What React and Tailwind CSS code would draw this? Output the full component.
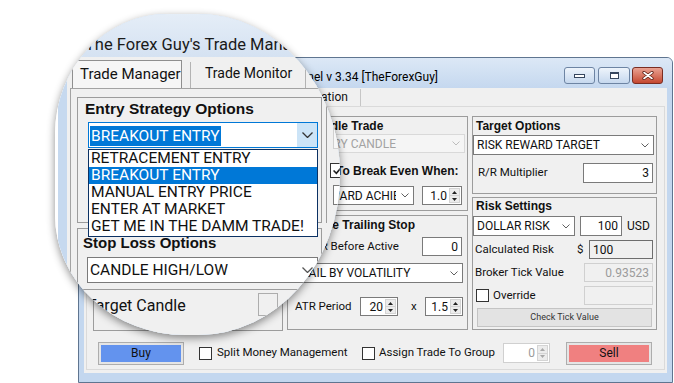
import React from "react";

const sans = "font-['Roboto','Liberation_Sans',sans-serif]";
const bold = "font-['Liberation_Sans',Arial,sans-serif] font-bold";

const Tri = ({ up, color = "#222" }) => (
  <svg width="5" height="3" viewBox="0 0 5 3">
    <polygon points={up ? "0,3 5,3 2.5,0" : "0,0 5,0 2.5,3"} fill={color} />
  </svg>
);

const Chevron = ({ color = "#606060", big }) =>
  big ? (
    <svg width="11" height="6" viewBox="0 0 11 6">
      <polyline points="0.5,0.5 5.5,5.5 10.5,0.5" fill="none" stroke={color} strokeWidth="1.3" />
    </svg>
  ) : (
    <svg width="8" height="5" viewBox="0 0 8 5">
      <polyline points="0.5,0.5 4,4 7.5,0.5" fill="none" stroke={color} strokeWidth="1" />
    </svg>
  );

const Check = ({ checked, big, className = "" }) => (
  <span
    className={`inline-flex shrink-0 items-center justify-center border border-[#333] bg-white ${
      big ? "w-[15px] h-[15px]" : "w-[13px] h-[13px]"
    } ${className}`}
  >
    {checked && (
      <svg width={big ? 11 : 9} height={big ? 9 : 8} viewBox="0 0 9 8">
        <polyline points="1,4 3.5,6.5 8,1" fill="none" stroke="#222" strokeWidth="1.4" />
      </svg>
    )}
  </span>
);

const Combo = ({ text, className = "", disabled }) => (
  <div
    className={`flex items-center border ${
      disabled ? "border-[#d9d9d9] bg-[#f5f5f5] text-[#a3a3a3]" : "border-[#7a7a7a] bg-white text-[#111]"
    } ${className}`}
  >
    <span className="flex-1 min-w-0 overflow-hidden whitespace-nowrap pl-[3px] text-[12px] leading-[14px]">
      {text}
    </span>
    <span className="w-[17px] shrink-0 flex justify-center">
      <Chevron color={disabled ? "#bdbdbd" : "#606060"} />
    </span>
  </div>
);

const tones = {
  normal: "border-[#7a7a7a] bg-white text-[#111]",
  readonly: "border-[#6e6e6e] bg-[#f0f0f0] text-[#111]",
  disabled: "border-[#d0d0d0] bg-[#f0f0f0] text-[#9b9b9b]",
};

const Field = ({ value, className = "", left, tone = "normal" }) => (
  <div
    className={`flex items-center border px-[3px] text-[12px] leading-[14px] ${
      left ? "justify-start" : "justify-end"
    } ${tones[tone]} ${className}`}
  >
    {value}
  </div>
);

const Spin = ({ value, className = "", disabled }) => {
  const c = disabled ? "#a8a8a8" : "#222";
  return (
    <div
      className={`flex border bg-white ${
        disabled ? "border-[#d0d0d0] text-[#9b9b9b]" : "border-[#7a7a7a] text-[#111]"
      } ${className}`}
    >
      <span className="flex-1 flex items-center justify-end pr-[2px] text-[12px] leading-[14px]">{value}</span>
      <span className="w-[11px] my-[1px] mr-[1px] flex flex-col bg-[#ececec] border border-[#d4d4d4]">
        <span className="flex-1 flex items-center justify-center border-b border-[#d4d4d4]">
          <Tri up color={c} />
        </span>
        <span className="flex-1 flex items-center justify-center">
          <Tri color={c} />
        </span>
      </span>
    </div>
  );
};

const Panel = ({ className = "", children }) => (
  <div className={`flex flex-col border border-[#9c9c9c] ${className}`}>{children}</div>
);

const Title = ({ children, className = "" }) => (
  <div className={`${bold} text-[12px] leading-[14px] text-[#111] whitespace-nowrap ${className}`}>{children}</div>
);

const entryItems = [
  "RETRACEMENT ENTRY",
  "BREAKOUT ENTRY",
  "MANUAL ENTRY PRICE",
  "ENTER AT MARKET",
  "GET ME IN THE DAMM TRADE!",
];

const Lens = () => (
  <div className="absolute left-[55px] top-[14px] w-[285px] h-[321px] overflow-hidden rounded-[112px_142px_142px_130px/120px_160px_160px_120px] shadow-[0_3px_8px_rgba(0,0,0,0.45)]">
    <div className="-ml-[55px] -mt-[14px] w-[674px] h-[383px] bg-white">
      <div className="ml-[58px] w-[600px] h-[383px] flex flex-col bg-[#c6d9ef]">
        <div className="h-[57px] shrink-0 pl-[27px] pt-[35px] bg-gradient-to-b from-[#eaf1f9] to-[#d5e2f2]">
          <div className="text-[16.5px] leading-[20px] text-[#1a1a1a] whitespace-nowrap">
            The Forex Guy's Trade Manager Panel v 3.34 [TheForexGuy]
          </div>
        </div>
        <div className="flex-1 ml-[9px] flex flex-col bg-[#f0f0f0] text-[#111]">
          <div className="h-[31px] shrink-0 flex items-end pl-[5px]">
            <div className="w-[110px] h-[28px] border border-b-0 border-[#8f8f8f] bg-[#f6f6f6] pl-[7px] pt-[4px] text-[15px] leading-[18px]">
              Trade Manager
            </div>
            <div className="ml-[8px] w-[116px] h-[26px] border-l border-r border-[#b3b3b3] pl-[14px] pt-[2px] text-[14px] leading-[18px]">
              Trade Monitor
            </div>
          </div>
          <div className="ml-[3px] flex-1 border-l border-t border-[#a3a3a3]">
            <div className="flex pl-[6px] pt-[8px]">
              <div className="w-[245px] flex flex-col">
                <Panel className="h-[126px]">
                  <div className={`${bold} pl-[7px] mt-[2px] text-[15.5px] leading-[18px] whitespace-nowrap`}>
                    Entry Strategy Options
                  </div>
                  <div className="relative ml-[10px] mt-[4px] w-[230px] h-[26px] flex border border-[#0078d7] bg-white">
                    <div className="flex-1 pl-[1px] pt-[1px]">
                      <span className="inline-block bg-[#0078d7] px-[1px] text-white text-[15.5px] leading-[20px]">
                        BREAKOUT ENTRY
                      </span>
                    </div>
                    <div className="w-[20px] flex items-center justify-center bg-[#cce4f7]">
                      <Chevron big color="#333" />
                    </div>
                    <div className="absolute left-[-1px] top-[26px] z-10 w-[230px] h-[88px] flex flex-col border border-[#0b3163] bg-white">
                      {entryItems.map((item, i) => (
                        <div
                          key={item}
                          className={`h-[17px] pl-[2px] text-[15.5px] leading-[17px] whitespace-nowrap ${
                            i === 1 ? "bg-[#0078d7] text-white" : "text-[#111]"
                          }`}
                        >
                          {item}
                        </div>
                      ))}
                    </div>
                  </div>
                </Panel>
                <Panel className="mt-[5px] h-[62px]">
                  <div className={`${bold} pl-[5px] mt-[5px] text-[15px] leading-[18px] whitespace-nowrap`}>
                    Stop Loss Options
                  </div>
                  <div className="ml-[9px] mt-[5px] w-[231px] h-[26px] flex items-center border border-[#7a7a7a] bg-white">
                    <span className="flex-1 pl-[2px] text-[15.5px] leading-[20px] whitespace-nowrap">CANDLE HIGH/LOW</span>
                    <span className="w-[20px] flex justify-center">
                      <Chevron big color="#555" />
                    </span>
                  </div>
                </Panel>
                <div className="mt-[3px] h-[24px] flex">
                  <div className="w-[181px] pl-[10px] pt-[4px] text-[16px] leading-[18px]">Target Candle</div>
                  <div className="w-[20px] h-[23px] border border-[#adadad] bg-[#f0f0f0]" />
                </div>
              </div>
              <div className="ml-[4px] w-[200px] h-[126px] flex flex-col border-l border-t border-[#9c9c9c]">
                <div className="ml-[6px] mt-[25px] w-[150px] h-[26px] border border-[#d0d0d0] bg-[#f7f7f7]" />
                <Check big checked className="ml-[3px] mt-[14px]" />
                <div className="ml-[6px] mt-[7px] w-[150px] h-[20px] border border-[#7a7a7a] bg-white" />
              </div>
            </div>
          </div>
        </div>
      </div>
    </div>
  </div>
);

export default function App() {
  return (
    <div className={`relative w-[674px] h-[383px] overflow-hidden bg-white pl-[78px] pt-[57px] ${sans}`}>
      <div className="w-[595px] h-[326px] flex flex-col rounded-t-[6px] border border-[#5f7590] bg-[#c3d7ef]">
        <div className="h-[30px] shrink-0 flex items-start rounded-t-[5px] bg-gradient-to-b from-[#dce8f6] to-[#c5d8ef]">
          <div className="pl-[44px] pt-[12px] text-[12px] leading-[14px] text-black whitespace-nowrap">
            The Forex Guy's Trade Manager Panel v 3.34 [TheForexGuy]
          </div>
          <div className="ml-auto mr-[9px] mt-[9px] flex">
            <div className="w-[31px] h-[17px] flex justify-center rounded-[3px] border border-[#6d84a3] bg-gradient-to-b from-[#eef4fb] to-[#c6d8ee]">
              <div className="mt-[6px] w-[11px] h-[4px] border border-[#36465e] bg-white" />
            </div>
            <div className="ml-[3px] w-[32px] h-[17px] flex items-center justify-center rounded-[3px] border border-[#6d84a3] bg-gradient-to-b from-[#eef4fb] to-[#c6d8ee]">
              <div className="w-[9px] h-[7px] border border-[#36465e] border-t-2 bg-white" />
            </div>
            <div className="ml-[2px] w-[31px] h-[17px] flex items-center justify-center rounded-[3px] border border-[#7a2d22] bg-gradient-to-b from-[#e9a293] to-[#c4462f]">
              <svg width="12" height="9" viewBox="0 0 12 9">
                <path d="M2 1.5 L10 7.5 M10 1.5 L2 7.5" stroke="#5b1d12" strokeWidth="3.2" strokeLinecap="round" />
                <path d="M2 1.5 L10 7.5 M10 1.5 L2 7.5" stroke="#fff" strokeWidth="1.6" strokeLinecap="round" />
              </svg>
            </div>
          </div>
        </div>

        <div className="mx-[5px] h-[285px] shrink-0 flex flex-col bg-[#f0f0f0] text-[#111]">
          <div className="h-[18px] shrink-0 flex items-end pl-[2px] text-[12px] leading-[14px]">
            <div className="w-[88px] h-[18px] border border-b-0 border-[#cfcfcf] bg-white pl-[6px] pt-[1px]">Trade Manager</div>
            <div className="w-[86px] h-[17px] border-r border-[#cfcfcf] pl-[6px] pt-[1px]">Trade Monitor</div>
            <div className="w-[101px] h-[17px] border-r border-[#c6c6c6] pl-[6px] pt-[1px]">Documentation</div>
          </div>

          <div className="ml-[2px] w-[579px] h-[264px] flex flex-col border border-[#dadada]">
            <div className="flex gap-[4px] pl-[6px] pt-[9px]">
              {/* left column */}
              <div className="w-[190px] flex flex-col gap-[4px]">
                <Panel className="h-[54px]">
                  <Title className="pl-[3px] mt-[2px]">Entry Strategy Options</Title>
                  <Combo text="BREAKOUT ENTRY" className="ml-[1px] mt-[1px] w-[186px] h-[20px]" />
                </Panel>
                <Panel className="h-[54px]">
                  <Title className="pl-[3px] mt-[2px]">Stop Loss Options</Title>
                  <Combo text="CANDLE HIGH/LOW" className="ml-[1px] mt-[1px] w-[186px] h-[20px]" />
                </Panel>
                <Panel className="h-[99px]">
                  <div className="mt-[4px] h-[20px] flex items-center pl-[3px] text-[11.5px]">
                    <span className="flex-1">Target Candle</span>
                    <Spin value="1" className="w-[40px] h-[19px] mr-[4px]" />
                  </div>
                </Panel>
              </div>

              {/* middle column */}
              <div className="w-[181px] flex flex-col gap-[4px]">
                <Panel className="h-[95px]">
                  <div className="mt-[1px] h-[16px] flex items-center gap-[4px] pl-[3px]">
                    <Check checked />
                    <Title>Handle Trade</Title>
                  </div>
                  <Combo disabled text="ENTRY CANDLE" className="ml-[19px] w-[158px] h-[19px]" />
                  <div className="mt-[11px] h-[14px] flex items-center">
                    <Check checked />
                    <Title className="ml-[1px]">Move To Break Even When:</Title>
                  </div>
                  <div className="mt-[8px] flex">
                    <Combo text="REWARD ACHIEVED" className="ml-[23px] w-[103px] h-[19px]" />
                    <Spin value="1.0" className="ml-[8px] w-[40px] h-[19px]" />
                  </div>
                </Panel>
                <Panel className="h-[115px]">
                  <div className="mt-[1px] h-[16px] flex items-center gap-[4px] pl-[12px]">
                    <Check checked />
                    <Title>Use Trailing Stop</Title>
                  </div>
                  <div className="mt-[4px] h-[19px] flex items-center text-[11.5px]">
                    <span className="ml-[19px]">ATR Before Active</span>
                    <Field value="0" className="ml-auto mr-[5px] w-[40px] h-[19px]" />
                  </div>
                  <Combo text="TRAIL BY VOLATILITY" className="ml-[2px] mt-[7px] w-[173px] h-[20px]" />
                  <div className="mt-[14px] h-[19px] flex items-center text-[11.5px]">
                    <span className="ml-[7px] w-[65px]">ATR Period</span>
                    <Spin value="20" className="w-[38px] h-[19px]" />
                    <span className="w-[27px] pl-[13px]">x</span>
                    <Spin value="1.5" className="w-[38px] h-[19px]" />
                  </div>
                </Panel>
              </div>

              {/* right column */}
              <div className="w-[185px] flex flex-col gap-[3px]">
                <Panel className="h-[78px]">
                  <Title className="pl-[3px] mt-[2px]">Target Options</Title>
                  <Combo text="RISK REWARD TARGET" className="mt-[2px] w-[181px] h-[20px]" />
                  <div className="mt-[8px] h-[20px] flex items-center text-[11.5px]">
                    <span className="pl-[5px]">R/R Multiplier</span>
                    <Field value="3" className="ml-auto mr-[3px] w-[70px] h-[20px]" />
                  </div>
                </Panel>
                <Panel className="h-[133px]">
                  <Title className="pl-[3px] mt-[1px]">Risk Settings</Title>
                  <div className="mt-[3px] h-[20px] flex items-center text-[11.5px]">
                    <Combo text="DOLLAR RISK" className="w-[102px] h-[20px]" />
                    <Field value="100" className="ml-[5px] w-[42px] h-[20px]" />
                    <span className="ml-[5px] text-[12px]">USD</span>
                  </div>
                  <div className="mt-[4px] h-[19px] flex items-center text-[11.5px]">
                    <span className="w-[104px] pl-[2px]">Calculated Risk</span>
                    <span className="w-[12px]">$</span>
                    <Field left tone="readonly" value="100" className="w-[64px] h-[19px]" />
                  </div>
                  <div className="mt-[4px] h-[19px] flex items-center text-[11.5px]">
                    <span className="w-[111px] pl-[2px]">Broker Tick Value</span>
                    <Field tone="disabled" value="0.93523" className="w-[69px] h-[19px]" />
                  </div>
                  <div className="mt-[4px] h-[19px] flex items-center text-[11.5px]">
                    <Check className="ml-[3px]" />
                    <span className="ml-[4px]">Override</span>
                    <Field tone="disabled" value="" className="ml-auto mr-[3px] w-[69px] h-[19px]" />
                  </div>
                  <div className="ml-[4px] mt-[3px] w-[175px] h-[19px] flex items-center justify-center border border-[#c4c4c4] bg-[#e3e3e3] text-[9px] text-[#333]">
                    Check Tick Value
                  </div>
                </Panel>
              </div>
            </div>

            {/* bottom row */}
            <div className="mt-[10px] h-[24px] flex items-center pl-[11px] text-[11.5px]">
              <div className="w-[86px] h-[23px] p-[2px] border border-[#adadad] bg-[#e5e5e5]">
                <div className="h-full flex items-center justify-center bg-[#6393ee] text-[12px]">Buy</div>
              </div>
              <div className="ml-[15px] w-[163px] flex items-center">
                <Check />
                <span className="ml-[5px]">Split Money Management</span>
              </div>
              <div className="w-[141px] flex items-center">
                <Check />
                <span className="ml-[4px]">Assign Trade To Group</span>
              </div>
              <Spin disabled value="0" className="w-[47px] h-[20px]" />
              <div className="ml-[16px] w-[86px] h-[23px] p-[2px] border border-[#adadad] bg-[#e5e5e5]">
                <div className="h-full flex items-center justify-center bg-[#f08080] text-[12px]">Sell</div>
              </div>
            </div>
          </div>
        </div>
      </div>

      <Lens />
    </div>
  );
}
